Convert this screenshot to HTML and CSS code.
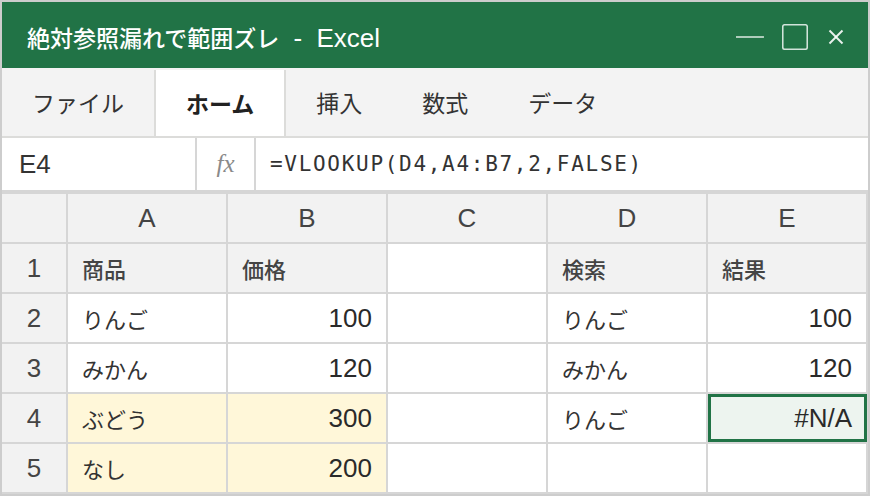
FILE: index.html
```html
<!DOCTYPE html>
<html lang="ja">
<head>
    <meta charset="UTF-8">
    <meta name="viewport" content="width=device-width, initial-scale=1.0">
    <title>絶対参照漏れで範囲ズレ - Excel</title>
    <link rel="stylesheet" href="styles.css">
</head>
<body>
    <div class="window">
        <div class="titlebar">
            <div class="title">絶対参照漏れで範囲ズレ<span class="app"> - Excel</span></div>
            <div class="controls">
                <svg width="28" height="28" viewBox="0 0 28 28"><line x1="0" y1="14" x2="28" y2="14" /></svg>
                <svg width="26" height="26" viewBox="0 0 26 26"><rect x="0.75" y="0.75" width="24.5" height="24.5" rx="2" /></svg>
                <svg class="close" width="16" height="16" viewBox="0 0 16 16"><line x1="1.5" y1="1.5" x2="14.5" y2="14.5" /><line x1="14.5" y1="1.5" x2="1.5" y2="14.5" /></svg>
            </div>
        </div>

        <div class="tabs">
            <div class="tab">ファイル</div>
            <div class="tab active">ホーム</div>
            <div class="tab">挿入</div>
            <div class="tab">数式</div>
            <div class="tab">データ</div>
        </div>

        <div class="formula-bar">
            <div class="name-box">E4</div>
            <div class="fx">fx</div>
            <div class="formula">=VLOOKUP(D4,A4:B7,2,FALSE)</div>
        </div>

        <div class="grid">
            <div class="head"></div>
            <div class="head">A</div>
            <div class="head">B</div>
            <div class="head">C</div>
            <div class="head">D</div>
            <div class="head">E</div>

            <div class="rownum">1</div>
            <div class="cell label jp">商品</div>
            <div class="cell label jp">価格</div>
            <div class="cell"></div>
            <div class="cell label jp">検索</div>
            <div class="cell label jp">結果</div>

            <div class="rownum">2</div>
            <div class="cell jp">りんご</div>
            <div class="cell num">100</div>
            <div class="cell"></div>
            <div class="cell jp">りんご</div>
            <div class="cell num">100</div>

            <div class="rownum">3</div>
            <div class="cell jp">みかん</div>
            <div class="cell num">120</div>
            <div class="cell"></div>
            <div class="cell jp">みかん</div>
            <div class="cell num">120</div>

            <div class="rownum">4</div>
            <div class="cell range jp">ぶどう</div>
            <div class="cell range num">300</div>
            <div class="cell"></div>
            <div class="cell jp">りんご</div>
            <div class="cell num selected">#N/A</div>

            <div class="rownum">5</div>
            <div class="cell range jp">なし</div>
            <div class="cell range num">200</div>
            <div class="cell"></div>
            <div class="cell"></div>
            <div class="cell"></div>
        </div>
    </div>
</body>
</html>
```

FILE: styles.css
```css
body {
    margin: 0;
    padding: 0;
    background: #cdcdcd;
    font-family: 'Liberation Sans', 'Noto Sans CJK JP', sans-serif;
    font-size: 26px;
    color: #333;
    overflow: hidden;
}

.window {
    margin: 2px;
    width: 866px;
    height: 492px;
    background: #fff;
    overflow: hidden;
}

/* title bar */
.titlebar {
    height: 66px;
    background: #217346;
    display: flex;
    align-items: center;
    justify-content: space-between;
    padding: 0 24px 0 25px;
    box-sizing: border-box;
}

.title {
    color: #fff;
    font-family: 'Noto Sans CJK JP', sans-serif;
    font-size: 23px;
    font-weight: 500;
    padding-top: 4px;
}

.title .app {
    font-family: 'Liberation Sans', sans-serif;
    font-size: 26px;
    word-spacing: 7px;
}

.controls {
    display: flex;
    align-items: center;
    gap: 18px;
    padding-top: 4px;
}

.controls svg {
    fill: none;
    stroke: rgba(255, 255, 255, 0.8);
    stroke-width: 1.6;
}

.controls .close {
    margin-left: 2px;
    stroke-width: 2;
    stroke: rgba(255, 255, 255, 0.9);
}

/* ribbon tabs */
.tabs {
    height: 68px;
    background: #f3f3f3;
    border-bottom: 2px solid #dcdcda;
    display: flex;
}

.tab {
    display: flex;
    align-items: center;
    padding: 0 30px;
    font-family: 'Noto Sans CJK JP', sans-serif;
    font-size: 23px;
    color: #333;
}

.tab.active {
    background: #fff;
    margin-top: 2px;
    padding: 0 30px;
    border-left: 2px solid #dcdcda;
    border-right: 2px solid #dcdcda;
    font-weight: bold;
    color: #222;
}

/* formula bar */
.formula-bar {
    height: 52px;
    display: flex;
    align-items: stretch;
}

.name-box {
    width: 195px;
    border-right: 2px solid #d6d6d6;
    display: flex;
    align-items: center;
    padding-left: 17px;
    box-sizing: border-box;
}

.fx {
    width: 59px;
    border-right: 2px solid #d6d6d6;
    box-sizing: border-box;
    display: flex;
    align-items: center;
    justify-content: center;
    font-family: 'Liberation Serif', serif;
    font-style: italic;
    font-size: 25px;
    color: #8a8a8a;
}

.formula {
    display: flex;
    align-items: center;
    padding-left: 14px;
    font-family: 'DejaVu Sans Mono', monospace;
    font-size: 21px;
    letter-spacing: 1.7px;
    color: #333;
}

/* grid */
.grid {
    display: grid;
    grid-template-columns: 64px repeat(5, 158px);
    grid-auto-rows: 48px;
    gap: 2px;
    padding: 4px 2px 2px 0;
    background: #d6d6d6;
}

.head,
.rownum {
    background: #f2f2f2;
    display: flex;
    align-items: center;
    justify-content: center;
    color: #444;
}

.cell {
    background: #fff;
    display: flex;
    align-items: center;
    padding: 0 14px;
    position: relative;
}

.cell.jp {
    font-family: 'Noto Sans CJK JP', sans-serif;
    font-size: 22px;
}

.cell.label {
    background: #f2f2f2;
    font-weight: 500;
    color: #444;
}

.cell.num {
    justify-content: flex-end;
    color: #2a2a2a;
}

.cell.range {
    background: #fff7d9;
}

.cell.selected {
    background: #edf4ef;
}

.cell.selected::after {
    content: '';
    position: absolute;
    top: 0;
    left: 0;
    right: -1px;
    bottom: 0;
    border: 3px solid #217346;
}
```
